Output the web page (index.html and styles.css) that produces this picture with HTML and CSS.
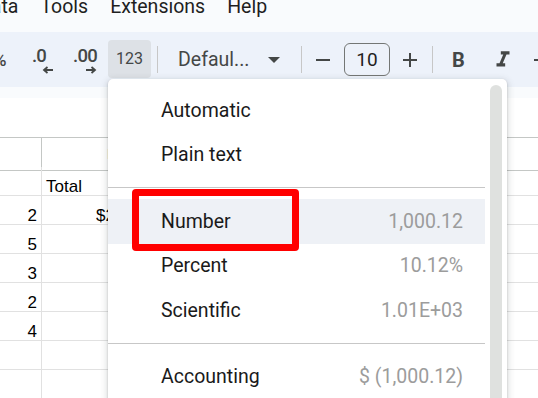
FILE: index.html
```html
<!DOCTYPE html>
<html lang="en">
  <head>
    <meta charset="UTF-8" />
    <meta name="viewport" content="width=device-width, initial-scale=1.0" />
    <link rel="stylesheet" href="styles.css">
  </head>
  <body>
    <div class="menubar">
      <span>Data</span>
      <span>Tools</span>
      <span>Extensions</span>
      <span>Help</span>
    </div>

    <div class="toolbar">
      <div class="tb pct">%</div>
      <div class="tb dec-less">
        <span class="dec-text">.0</span>
        <svg class="dec-arrow" width="12" height="8" viewBox="0 0 12 8">
          <path d="M11 4H2.5M5.5 1L2 4l3.5 3" fill="none" stroke="#444746" stroke-width="1.8" />
        </svg>
      </div>
      <div class="tb dec-more">
        <span class="dec-text">.00</span>
        <svg class="dec-arrow" width="12" height="8" viewBox="0 0 12 8">
          <path d="M1 4h8.5M6.5 1L10 4 6.5 7" fill="none" stroke="#444746" stroke-width="1.8" />
        </svg>
      </div>
      <div class="tb fmt-btn">123</div>
      <div class="tb-sep"></div>
      <div class="font-select">
        <span>Defaul...</span>
        <svg width="12" height="6" viewBox="0 0 12 6"><path d="M0 0h12L6 6z" fill="#444746" /></svg>
      </div>
      <div class="tb-sep"></div>
      <div class="tb size-minus">
        <svg width="16" height="16" viewBox="0 0 16 16"><path d="M1 8h14" stroke="#444746" stroke-width="2" /></svg>
      </div>
      <div class="size-box">10</div>
      <div class="tb size-plus">
        <svg width="16" height="16" viewBox="0 0 16 16"><path d="M1 8h14M8 1v14" stroke="#444746" stroke-width="2" /></svg>
      </div>
      <div class="tb-sep"></div>
      <div class="tb bold">B</div>
      <div class="tb italic">
        <svg width="26" height="26" viewBox="0 0 24 24"><path d="M10 4v3h2.21l-3.42 8H6v3h8v-3h-2.21l3.42-8H18V4z" fill="#444746" /></svg>
      </div>
      <div class="tb strike">
        <svg width="20" height="20" viewBox="0 0 20 20"><path d="M2 10h16" stroke="#444746" stroke-width="2" /></svg>
      </div>
    </div>

    <div class="formula-gap"></div>
    <div class="formula-bar"></div>

    <div class="sheet">
      <div class="head"></div>
      <div class="head head-b">B</div>

      <div class="cell"></div>
      <div class="cell text">Total</div>

      <div class="cell num">2</div>
      <div class="cell text money">$25.00</div>

      <div class="cell num">5</div>
      <div class="cell"></div>

      <div class="cell num">3</div>
      <div class="cell"></div>

      <div class="cell num">2</div>
      <div class="cell"></div>

      <div class="cell num">4</div>
      <div class="cell"></div>

      <div class="cell"></div>
      <div class="cell"></div>

      <div class="cell"></div>
      <div class="cell"></div>

      <div class="cell"></div>
      <div class="cell"></div>
    </div>

    <div class="dropdown">
      <div class="dropdown-list">
        <div class="item"><span>Automatic</span></div>
        <div class="item"><span>Plain text</span></div>
        <div class="item-sep"></div>
        <div class="item active"><span>Number</span><span class="val">1,000.12</span></div>
        <div class="item"><span>Percent</span><span class="val">10.12%</span></div>
        <div class="item"><span>Scientific</span><span class="val">1.01E+03</span></div>
        <div class="item-sep"></div>
        <div class="item"><span>Accounting</span><span class="val">$ (1,000.12)</span></div>
      </div>
      <div class="dropdown-track">
        <div class="thumb"></div>
      </div>
      <div class="callout"></div>
    </div>
  </body>
</html>
```

FILE: styles.css
```css
body {
  margin: 0;
  width: 538px;
  height: 398px;
  overflow: hidden;
  background-color: #f9fbfd;
  font-family: Roboto, "Noto Sans", sans-serif;
  color: #1f1f1f;
  position: relative;
}

.menubar {
  display: flex;
  gap: 22px;
  height: 32px;
  margin-left: -22px;
  font-size: 19.5px;
  white-space: nowrap;
}
.menubar span {
  display: block;
  line-height: 20px;
  margin-top: -3px;
}

.toolbar {
  display: flex;
  align-items: center;
  height: 55px;
  width: 600px;
  margin-left: -13px;
  background-color: #edf2fa;
  color: #444746;
  white-space: nowrap;
}
.tb {
  display: flex;
  align-items: center;
  justify-content: center;
  height: 38px;
  flex: none;
}
.pct {
  width: 26px;
  font-size: 18px;
  font-weight: 500;
}
.dec-less,
.dec-more {
  width: 40px;
  position: relative;
  font-size: 18.5px;
  font-weight: 500;
}
.dec-less {
  margin-left: 9px;
}
.dec-more {
  margin-left: 3px;
}
.dec-text {
  letter-spacing: -0.8px;
  margin-top: -7px;
}
.dec-less .dec-text {
  margin-right: 6px;
}
.dec-arrow {
  position: absolute;
  top: 25px;
  left: 20px;
}
.fmt-btn {
  width: 43px;
  height: 38px;
  margin-left: 3px;
  margin-top: -2px;
  border-radius: 4px;
  background-color: #dde1e6;
  font-size: 16px;
}
.tb-sep {
  width: 1px;
  height: 27px;
  background-color: #c7c7c7;
  flex: none;
}
.fmt-btn + .tb-sep {
  margin-left: 6px;
}
.font-select {
  display: flex;
  align-items: center;
  width: 143px;
  padding-left: 20px;
  box-sizing: border-box;
  font-size: 19.5px;
  flex: none;
}
.font-select svg {
  margin-left: 19px;
}
.size-minus {
  width: 36px;
  margin-left: 3px;
}
.size-box {
  width: 46px;
  height: 33px;
  margin-left: 3px;
  box-sizing: border-box;
  border: 1px solid #747775;
  border-radius: 6px;
  display: flex;
  align-items: center;
  justify-content: center;
  font-size: 19px;
  color: #1f1f1f;
  flex: none;
}
.size-plus {
  width: 35px;
  margin-left: 2px;
  margin-right: 5px;
}
.bold {
  width: 39px;
  margin-left: 6px;
  font-size: 20px;
  font-weight: 700;
}
.italic {
  width: 39px;
  margin-left: 5px;
}
.strike {
  width: 20px;
  margin-left: 10px;
}

.formula-gap {
  height: 11px;
}
.formula-bar {
  height: 39px;
  background-color: #ffffff;
}

.sheet {
  display: grid;
  grid-template-columns: 42px 1fr;
  grid-auto-rows: 29px;
  background-color: #ffffff;
  border-top: 1px solid #c4c7c5;
  font-family: "Liberation Sans", Arial, sans-serif;
  font-size: 17px;
  color: #000000;
}
.head {
  height: 33px;
  box-sizing: border-box;
  border-bottom: 1px solid #c4c7c5;
  font-size: 15px;
  color: #5f6368;
  line-height: 32px;
}
.sheet .head:first-child {
  border-right: 1px solid #c4c7c5;
}
.head-b {
  padding-left: 65px;
}
.cell {
  box-sizing: border-box;
  border-bottom: 1px solid #e1e1e1;
  display: flex;
  align-items: flex-end;
  line-height: 17px;
  padding-bottom: 0;
}
.sheet .cell:nth-child(odd) {
  border-right: 1px solid #e1e1e1;
  justify-content: flex-end;
  padding-right: 4px;
}
.text {
  padding-left: 4px;
}
.money {
  padding-left: 54px;
}

.dropdown {
  position: absolute;
  left: 108px;
  top: 79px;
  width: 399px;
  height: 340px;
  display: flex;
  background-color: #ffffff;
  border-radius: 5px;
  box-shadow: 0 2px 6px 2px rgba(60, 64, 67, 0.15), 0 1px 2px rgba(60, 64, 67, 0.3);
}
.dropdown-list {
  width: 377px;
  padding-top: 9px;
}
.item {
  height: 44.5px;
  display: flex;
  align-items: center;
  justify-content: space-between;
  padding: 0 22px 0 53px;
  font-size: 19.5px;
  color: #1a1a1a;
}
.item.active {
  background-color: #eef1f6;
}
.val {
  color: #9c9c9c;
}
.item-sep {
  height: 1px;
  margin: 10px 0 11px;
  background-color: #c7c7c7;
}
.dropdown-track {
  width: 22px;
}
.thumb {
  width: 12px;
  height: 330px;
  margin: 6px 0 0 5px;
  border-radius: 6px;
  background-color: #dfe1df;
}
.callout {
  position: absolute;
  left: 24px;
  top: 110px;
  width: 167px;
  height: 62px;
  box-sizing: border-box;
  border: 7px solid #ff0000;
  border-radius: 4px;
}
```
